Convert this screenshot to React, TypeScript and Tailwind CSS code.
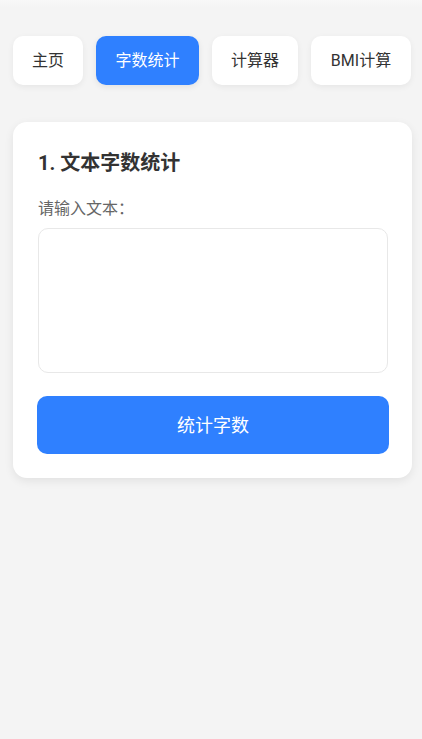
const tabs = [
  { label: '主页', w: 'w-[70px]' },
  { label: '字数统计', w: 'w-[103px]' },
  { label: '计算器', w: 'w-[86px]' },
  { label: 'BMI计算', w: 'w-[100px]' },
];

export default function App() {
  return (
    <div
      className="min-h-[739px] bg-[#f4f4f4] text-[#333]"
      style={{ fontFamily: 'Roboto, "Noto Sans CJK SC", sans-serif' }}
    >
      <div className="h-2 bg-gradient-to-b from-[#f8f8f8] to-[#f4f4f4]" />
      <nav className="flex gap-[13px] px-[13px] pt-7">
        {tabs.map((t, i) => (
          <button
            key={t.label}
            className={
              (i === 1
                ? 'bg-[#2f80ff] text-white shadow-[0_2px_6px_rgba(0,0,0,0.08)] '
                : 'bg-white text-[#333] shadow-[0_2px_6px_rgba(0,0,0,0.06)] ') +
              t.w +
              ' h-[49px] shrink-0 rounded-[10px] text-base'
            }
          >
            {t.label}
          </button>
        ))}
      </nav>

      <div className="mx-[13px] mt-[37px] w-[399px] rounded-[14px] bg-white px-[25px] pt-[25px] pb-[24px] shadow-[0_3px_10px_rgba(0,0,0,0.08)]">
        <h2 className="text-[20px] font-bold leading-[32px] text-[#333]">1. 文本字数统计</h2>
        <p className="mt-[19px] text-base leading-[22px] text-[#666]">请输入文本：</p>
        <textarea className="mt-[8px] block h-[145px] w-[350px] resize-none rounded-[10px] border border-[#e8e8e8] outline-none" />
        <button className="mt-[23px] h-[58px] w-[352px] -ml-px rounded-[10px] bg-[#2f80ff] text-[18px] text-white">
          统计字数
        </button>
      </div>
    </div>
  );
}
